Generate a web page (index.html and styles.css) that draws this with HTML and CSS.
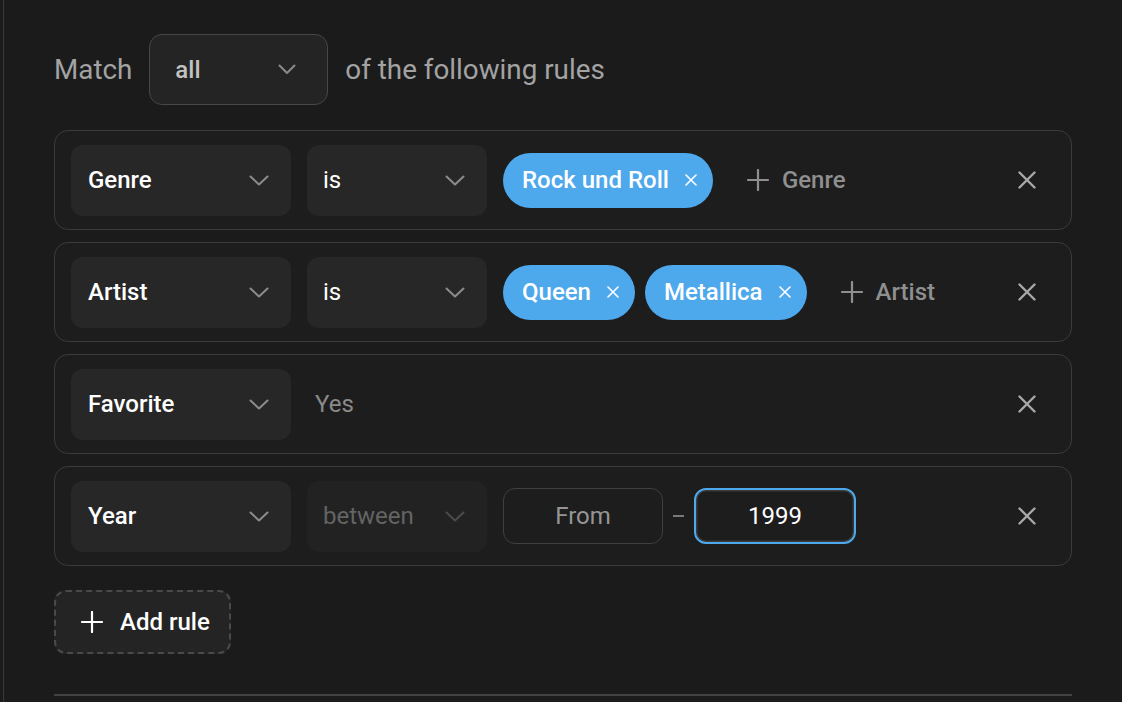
FILE: index.html
```html
<!DOCTYPE html>
<html lang="en">
<head>
<meta charset="utf-8">
<title>Rules</title>
<link rel="stylesheet" href="styles.css">
</head>
<body>
<div class="panel">
  <div class="match-row">
    <span class="match-label">Match</span>
    <div class="match-select">
      <span>all</span>
      <svg class="chev" width="18" height="11" viewBox="0 0 18 11"><polyline points="1.5,1.5 9,9 16.5,1.5" fill="none" stroke="currentColor" stroke-width="2" stroke-linecap="round" stroke-linejoin="round"/></svg>
    </div>
    <span class="match-label">of the following rules</span>
  </div>

  <div class="rules">
    <div class="rule">
      <div class="select field"><span>Genre</span><svg class="chev" width="20" height="11" viewBox="0 0 20 11"><polyline points="1.5,1.5 10,9.5 18.5,1.5" fill="none" stroke="currentColor" stroke-width="2" stroke-linecap="round" stroke-linejoin="round"/></svg></div>
      <div class="select op"><span>is</span><svg class="chev" width="20" height="11" viewBox="0 0 20 11"><polyline points="1.5,1.5 10,9.5 18.5,1.5" fill="none" stroke="currentColor" stroke-width="2" stroke-linecap="round" stroke-linejoin="round"/></svg></div>
      <div class="values">
        <span class="chip">Rock und Roll<svg class="chip-x" width="12" height="12" viewBox="0 0 12 12"><path d="M1 1L11 11M11 1L1 11" stroke="currentColor" stroke-width="1.6" stroke-linecap="round"/></svg></span>
        <span class="add-value"><svg width="22" height="22" viewBox="0 0 22 22"><path d="M11 1V21M1 11H21" stroke="currentColor" stroke-width="2.2" stroke-linecap="round"/></svg>Genre</span>
      </div>
      <svg class="remove" width="18" height="18" viewBox="0 0 18 18"><path d="M1.5 1.5L16.5 16.5M16.5 1.5L1.5 16.5" stroke="currentColor" stroke-width="2.4" stroke-linecap="round"/></svg>
    </div>

    <div class="rule">
      <div class="select field"><span>Artist</span><svg class="chev" width="20" height="11" viewBox="0 0 20 11"><polyline points="1.5,1.5 10,9.5 18.5,1.5" fill="none" stroke="currentColor" stroke-width="2" stroke-linecap="round" stroke-linejoin="round"/></svg></div>
      <div class="select op"><span>is</span><svg class="chev" width="20" height="11" viewBox="0 0 20 11"><polyline points="1.5,1.5 10,9.5 18.5,1.5" fill="none" stroke="currentColor" stroke-width="2" stroke-linecap="round" stroke-linejoin="round"/></svg></div>
      <div class="values">
        <span class="chip">Queen<svg class="chip-x" width="12" height="12" viewBox="0 0 12 12"><path d="M1 1L11 11M11 1L1 11" stroke="currentColor" stroke-width="1.6" stroke-linecap="round"/></svg></span>
        <span class="chip">Metallica<svg class="chip-x" width="12" height="12" viewBox="0 0 12 12"><path d="M1 1L11 11M11 1L1 11" stroke="currentColor" stroke-width="1.6" stroke-linecap="round"/></svg></span>
        <span class="add-value"><svg width="22" height="22" viewBox="0 0 22 22"><path d="M11 1V21M1 11H21" stroke="currentColor" stroke-width="2.2" stroke-linecap="round"/></svg>Artist</span>
      </div>
      <svg class="remove" width="18" height="18" viewBox="0 0 18 18"><path d="M1.5 1.5L16.5 16.5M16.5 1.5L1.5 16.5" stroke="currentColor" stroke-width="2.4" stroke-linecap="round"/></svg>
    </div>

    <div class="rule">
      <div class="select field"><span>Favorite</span><svg class="chev" width="20" height="11" viewBox="0 0 20 11"><polyline points="1.5,1.5 10,9.5 18.5,1.5" fill="none" stroke="currentColor" stroke-width="2" stroke-linecap="round" stroke-linejoin="round"/></svg></div>
      <div class="values"><span class="static-value">Yes</span></div>
      <svg class="remove" width="18" height="18" viewBox="0 0 18 18"><path d="M1.5 1.5L16.5 16.5M16.5 1.5L1.5 16.5" stroke="currentColor" stroke-width="2.4" stroke-linecap="round"/></svg>
    </div>

    <div class="rule">
      <div class="select field"><span>Year</span><svg class="chev" width="20" height="11" viewBox="0 0 20 11"><polyline points="1.5,1.5 10,9.5 18.5,1.5" fill="none" stroke="currentColor" stroke-width="2" stroke-linecap="round" stroke-linejoin="round"/></svg></div>
      <div class="select op disabled"><span>between</span><svg class="chev" width="20" height="11" viewBox="0 0 20 11"><polyline points="1.5,1.5 10,9.5 18.5,1.5" fill="none" stroke="currentColor" stroke-width="2" stroke-linecap="round" stroke-linejoin="round"/></svg></div>
      <div class="values range">
        <div class="num-input placeholder">From</div>
        <span class="dash"></span>
        <div class="num-input focused">1999</div>
      </div>
      <svg class="remove" width="18" height="18" viewBox="0 0 18 18"><path d="M1.5 1.5L16.5 16.5M16.5 1.5L1.5 16.5" stroke="currentColor" stroke-width="2.4" stroke-linecap="round"/></svg>
    </div>
  </div>

  <button class="add-rule"><svg width="22" height="22" viewBox="0 0 22 22"><path d="M11 1V21M1 11H21" stroke="currentColor" stroke-width="2.2" stroke-linecap="round"/></svg>Add rule</button>

  <div class="divider"></div>
</div>
</body>
</html>
```

FILE: styles.css
```css
html, body {
  margin: 0;
  padding: 0;
  background: #1b1b1b;
  height: 100%;
  overflow: hidden;
}

body {
  font-family: Roboto, "Liberation Sans", sans-serif;
  color: #fff;
}

.panel {
  margin-left: 3px;
  border-left: 1px solid #383838;
  padding: 34px 50px 0 50px;
  min-height: 100%;
  box-sizing: border-box;
}

.match-row {
  display: flex;
  align-items: center;
  gap: 17px;
  height: 71px;
}

.match-label {
  font-size: 27.8px;
  color: #a3a3a3;
}

.match-select {
  box-sizing: border-box;
  width: 179px;
  height: 71px;
  border: 1.5px solid #474747;
  border-radius: 13px;
  background: #242424;
  display: flex;
  align-items: center;
  justify-content: space-between;
  padding: 0 31px 0 25px;
  font-size: 24px;
  font-weight: 500;
  color: #c2c2c2;
}

.match-select .chev { color: #8a8a8a; }

.rules {
  margin-top: 25px;
  display: flex;
  flex-direction: column;
  gap: 12px;
}

.rule {
  box-sizing: border-box;
  height: 100px;
  border: 1.5px solid #3b3b3b;
  border-radius: 14px;
  background: #1d1d1d;
  display: flex;
  align-items: center;
  padding: 0 35px 0 16px;
  gap: 16px;
}

.select {
  box-sizing: border-box;
  height: 71px;
  border-radius: 12px;
  background: #272727;
  display: flex;
  align-items: center;
  justify-content: space-between;
  padding: 0 22px 0 17px;
  font-size: 24px;
  font-weight: 500;
  color: #fff;
  flex: none;
}

.select .chev { color: #8c8c8c; }

.select.field { width: 220px; }
.select.op { width: 180px; padding-left: 16px; font-weight: 400; }

.select.disabled {
  background: #222;
  color: #646464;
}
.select.disabled .chev { color: #4c4c4c; }

.values {
  flex: 1;
  display: flex;
  align-items: center;
  gap: 10px;
}

.chip {
  display: inline-flex;
  align-items: center;
  gap: 16px;
  height: 55px;
  padding: 0 16px 0 19px;
  border-radius: 28px;
  background: #4ea8ec;
  color: #fff;
  font-size: 24px;
  font-weight: 500;
  box-sizing: border-box;
}

.chip-x { color: #fff; }

.add-value {
  display: inline-flex;
  align-items: center;
  gap: 13px;
  margin-left: 24px;
  font-size: 24px;
  font-weight: 500;
  color: #8f8f8f;
}

.static-value {
  margin-left: 8px;
  font-size: 24px;
  color: #8a8a8a;
}

.range { gap: 0; }

.num-input {
  box-sizing: border-box;
  height: 56px;
  border-radius: 12px;
  display: flex;
  align-items: center;
  justify-content: center;
  font-size: 24px;
}

.num-input.placeholder {
  width: 160px;
  border: 1.5px solid #3f3f3f;
  color: #959595;
}

.num-input.focused {
  width: 162px;
  border: 2px solid #4ea8ec;
  box-shadow: inset 0 0 0 1.5px #3a3a3a;
  color: #fff;
}

.dash {
  width: 11px;
  height: 2px;
  background: #7a7a7a;
  margin: 0 10px 0 10px;
}

.remove {
  color: #a8a8a8;
  flex: none;
}

.add-rule {
  margin-top: 24px;
  box-sizing: border-box;
  height: 64px;
  width: 177px;
  border: 2px dashed #4a4a4a;
  border-radius: 12px;
  background: #242424;
  color: #fff;
  font-family: inherit;
  font-size: 24px;
  font-weight: 500;
  display: flex;
  align-items: center;
  gap: 17px;
  padding: 0 0 0 25px;
}

.divider {
  margin-top: 40px;
  height: 2px;
  background: #434343;
}
```
